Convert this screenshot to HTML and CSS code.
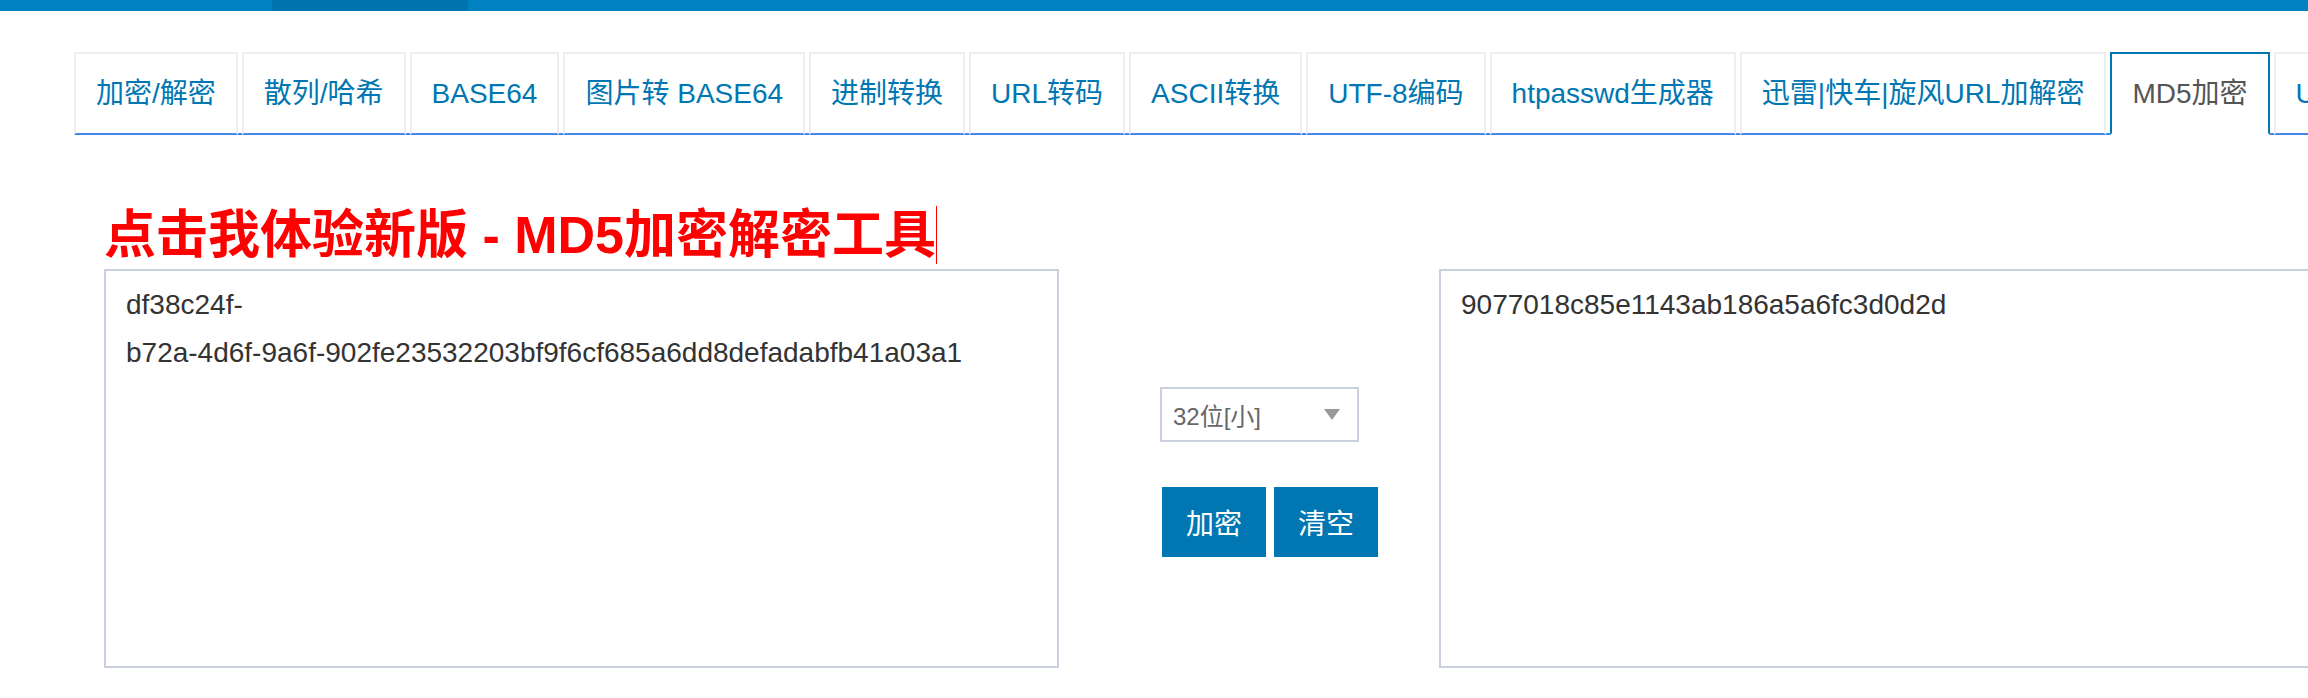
FILE: index.html
```html
<!DOCTYPE html>
<html lang="zh-CN">
<head>
<meta charset="utf-8">
<title>MD5加密</title>
<link rel="stylesheet" href="styles.css">
</head>
<body>
<div class="topbar"><div class="topbar-active"></div></div>
<div class="page">
  <ul class="tabs">
    <li class="tab"><a href="#">加密/解密</a></li>
    <li class="tab"><a href="#">散列/哈希</a></li>
    <li class="tab"><a href="#">BASE64</a></li>
    <li class="tab"><a href="#">图片转 BASE64</a></li>
    <li class="tab"><a href="#">进制转换</a></li>
    <li class="tab"><a href="#">URL转码</a></li>
    <li class="tab"><a href="#">ASCII转换</a></li>
    <li class="tab"><a href="#">UTF-8编码</a></li>
    <li class="tab"><a href="#">htpasswd生成器</a></li>
    <li class="tab"><a href="#">迅雷|快车|旋风URL加解密</a></li>
    <li class="tab active"><a href="#">MD5加密</a></li>
    <li class="tab"><a href="#">Unix时间戳</a></li>
  </ul>
  <div class="content">
    <div class="title"><a href="#">点击我体验新版 - MD5加密解密工具</a></div>
    <div class="workbench">
      <textarea class="box">df38c24f-
b72a-4d6f-9a6f-902fe23532203bf9f6cf685a6dd8defadabfb41a03a1</textarea>
      <div class="middle">
        <div class="select"><span>32位[小]</span><span class="arrow"></span></div>
        <div class="actions">
          <button class="btn">加密</button>
          <button class="btn">清空</button>
        </div>
      </div>
      <textarea class="box">9077018c85e1143ab186a5a6fc3d0d2d</textarea>
    </div>
  </div>
</div>
</body>
</html>
```
FILE: styles.css
```css
* { box-sizing: border-box; }
html, body { margin: 0; padding: 0; overflow: hidden; background: #fff; }
body {
  font-family: "Liberation Sans", Arial, "Noto Sans CJK SC", sans-serif;
  color: #333;
  width: 2308px;
  height: 698px;
}
.topbar { height: 11px; background: #0081c2; padding-left: 272px; }
.topbar-active { width: 196px; height: 100%; background: #0074af; }
.page { padding-left: 74px; padding-top: 41px; }
.tabs {
  display: flex;
  list-style: none;
  margin: 0;
  padding: 0;
  border-bottom: 2px solid #4388e8;
}
.tab { flex-shrink: 0; margin-right: 4px; margin-bottom: -2px; }
.tab a {
  display: block;
  padding: 20px;
  line-height: 39px;
  font-size: 28px;
  color: #0077b3;
  text-decoration: none;
  border: 2px solid #eee;
  border-bottom-color: transparent;
  white-space: nowrap;
}
.tab.active a {
  border-color: #0077b3;
  border-bottom-color: transparent;
  background: #fff;
  color: #555;
}
.content { padding-left: 30px; }
.title {
  margin: 71px 0 5px;
  font-size: 52px;
  line-height: 58px;
  font-weight: bold;
  white-space: nowrap;
}
.title a { color: #f00; text-decoration: none; border-right: 1px solid #f00; }
.workbench { display: flex; }
.box {
  flex: 0 0 955px;
  width: 955px;
  height: 399px;
  margin: 0;
  border: 2px solid #c8d0de;
  border-radius: 0;
  padding: 10px 20px;
  font-family: "Liberation Sans", Arial, "Noto Sans CJK SC", sans-serif;
  font-size: 28px;
  line-height: 48px;
  color: #333;
  background: #fff;
  resize: none;
  outline: none;
  overflow: hidden;
  white-space: pre-wrap;
}
.middle { flex: 0 0 380px; padding: 118px 0 0 101px; }
.select {
  width: 199px;
  height: 55px;
  border: 2px solid #c8d0de;
  display: flex;
  align-items: center;
  justify-content: space-between;
  padding: 0 17px 0 11px;
  font-size: 24px;
  color: #666;
}
.arrow {
  width: 0;
  height: 0;
  border-left: 8px solid transparent;
  border-right: 8px solid transparent;
  border-top: 11px solid #999;
}
.actions { display: flex; gap: 8px; margin: 45px 0 0 2px; }
.btn {
  width: 104px;
  height: 70px;
  padding: 0;
  border: 0;
  border-radius: 0;
  background: #0077b3;
  color: #fff;
  font-family: "Liberation Sans", Arial, "Noto Sans CJK SC", sans-serif;
  font-size: 28px;
}
```
